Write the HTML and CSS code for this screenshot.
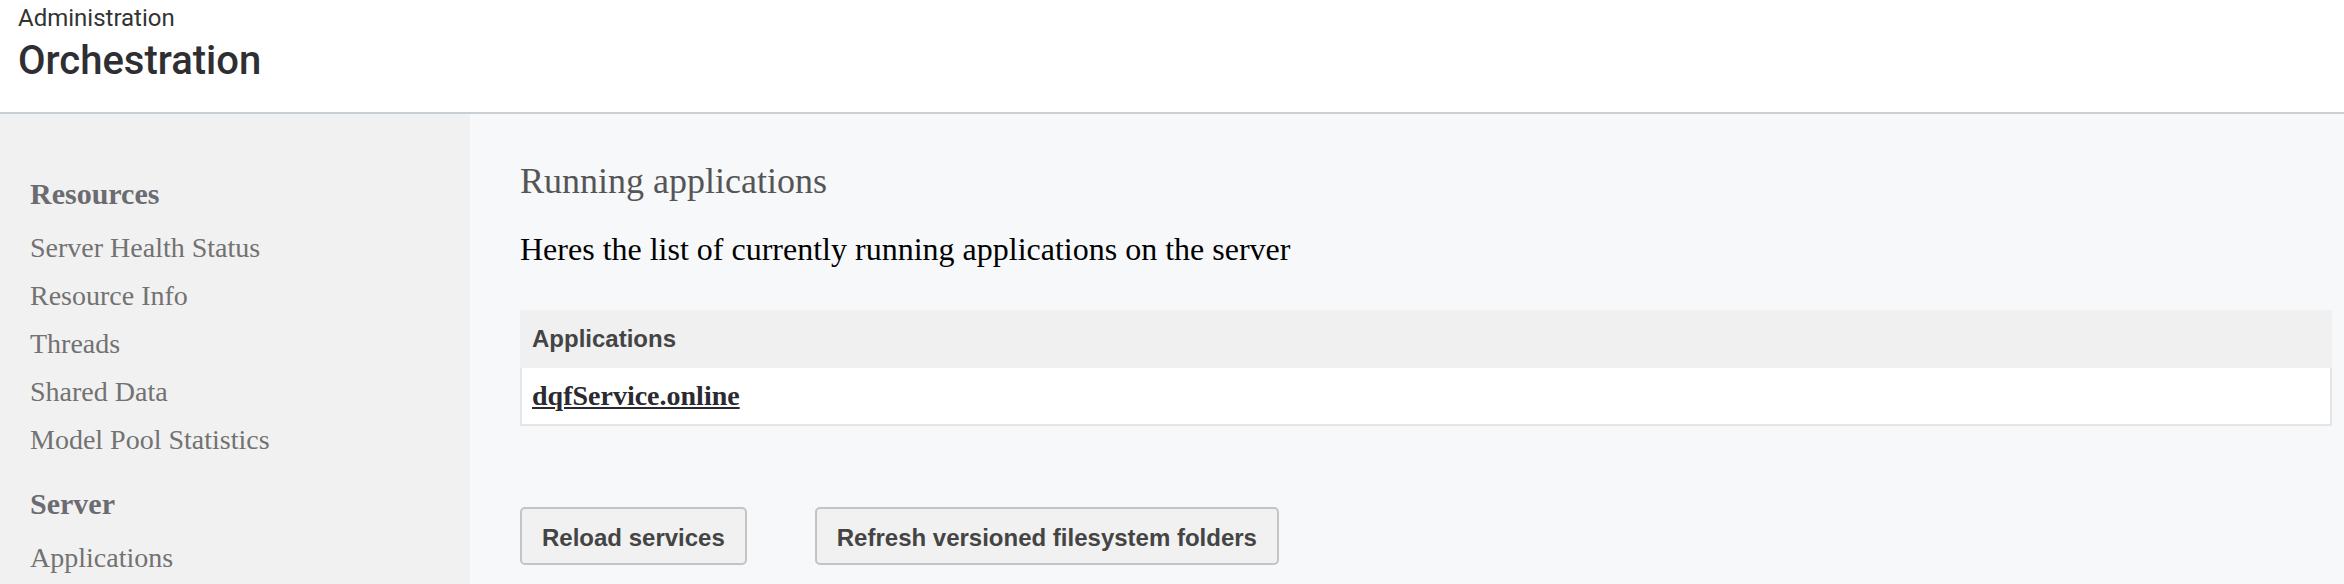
FILE: index.html
```html
<!DOCTYPE html>
<html lang="en">
<head>
<meta charset="utf-8">
<title>Orchestration</title>
<link rel="stylesheet" href="styles.css">
</head>
<body>
<header class="page-header">
  <div class="crumb">Administration</div>
  <h1 class="page-title">Orchestration</h1>
</header>
<div class="layout">
  <nav class="sidebar">
    <h3 class="nav-heading">Resources</h3>
    <ul class="nav-list">
      <li>Server Health Status</li>
      <li>Resource Info</li>
      <li>Threads</li>
      <li>Shared Data</li>
      <li>Model Pool Statistics</li>
    </ul>
    <h3 class="nav-heading nav-heading-2">Server</h3>
    <ul class="nav-list">
      <li>Applications</li>
    </ul>
  </nav>
  <main class="content">
    <h2 class="section-title">Running applications</h2>
    <p class="intro">Heres the list of currently running applications on the server</p>
    <div class="app-table">
      <div class="app-table-head">Applications</div>
      <div class="app-table-row"><a class="app-link" href="#">dqfService.online</a></div>
    </div>
    <div class="actions">
      <button class="btn">Reload services</button>
      <button class="btn btn-gap">Refresh versioned filesystem folders</button>
    </div>
  </main>
</div>
</body>
</html>
```
FILE: styles.css
```css
html, body {
  margin: 0;
  padding: 0;
}
body {
  background: #f7f8fa;
  font-family: "Liberation Serif", "Times New Roman", serif;
  height: 584px;
  overflow: hidden;
}
.page-header {
  background: #ffffff;
  height: 108px;
  border-bottom: 2px solid #c8d0d6;
  padding: 4px 0 0 18px;
  font-family: Roboto, "Liberation Sans", sans-serif;
}
.crumb {
  font-size: 24px;
  line-height: 28px;
  color: #333333;
}
.page-title {
  margin: 6px 0 0;
  font-size: 40px;
  line-height: 46px;
  font-weight: 500;
  color: #2e2e33;
}
.layout {
  display: flex;
  height: 470px;
}
.sidebar {
  width: 470px;
  flex: none;
  background: #f1f1f1;
  padding: 60px 0 0 30px;
  box-sizing: border-box;
}
.nav-heading {
  margin: 0 0 10px;
  font-size: 30px;
  line-height: 40px;
  font-weight: bold;
  color: #6b6b72;
}
.nav-heading-2 {
  margin-top: 20px;
  margin-bottom: 10px;
}
.nav-list {
  list-style: none;
  margin: 0;
  padding: 0;
}
.nav-list li {
  font-size: 28px;
  line-height: 48px;
  color: #727272;
}
.content {
  flex: 1;
  padding: 45px 12px 0 50px;
}
.section-title {
  margin: 0;
  font-size: 36px;
  line-height: 44px;
  font-weight: normal;
  color: #555555;
}
.intro {
  margin: 26px 0 0;
  font-size: 32px;
  line-height: 40px;
  color: #000000;
}
.app-table {
  margin-top: 41px;
  font-family: "Liberation Sans", Arial, sans-serif;
}
.app-table-head {
  background: #f0f0f0;
  height: 58px;
  line-height: 58px;
  padding-left: 12px;
  font-size: 24px;
  font-weight: bold;
  color: #444444;
}
.app-table-row {
  background: #ffffff;
  border: 2px solid #e5e5e6;
  border-top: none;
  height: 56px;
  line-height: 56px;
  padding-left: 10px;
}
.app-link {
  font-family: "Liberation Serif", "Times New Roman", serif;
  font-size: 28px;
  font-weight: bold;
  color: #2a2a30;
  text-decoration: underline;
}
.actions {
  display: flex;
  margin-top: 81px;
}
.btn {
  font-family: "Liberation Sans", Arial, sans-serif;
  font-size: 24px;
  font-weight: bold;
  line-height: 27px;
  color: #444444;
  background: #f1f1f1;
  border: 2px solid #c4c4c4;
  border-radius: 5px;
  padding: 15px 20px 12px;
  margin: 0;
}
.btn-gap {
  margin-left: 68px;
}
```
